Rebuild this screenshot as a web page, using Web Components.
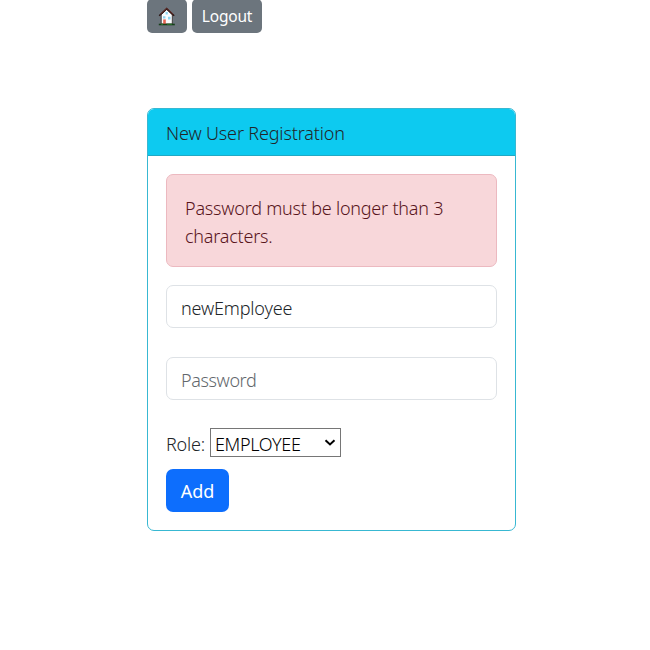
<!DOCTYPE html>
<html lang="en"><head><meta charset="utf-8"><title>New User Registration</title>
<style>body{margin:0;background:#fff;color:#212529;font:300 18px/28px "Noto Sans","Open Sans",sans-serif}</style></head>
<body><registration-page></registration-page>
<script>
const define=(name,html)=>customElements.define(name,class extends HTMLElement{
  constructor(){super();this.attachShadow({mode:'open'}).innerHTML=html}
});
define('nav-button',`<style>:host{display:block}button{all:unset;box-sizing:border-box;display:flex;justify-content:center;align-items:center;height:34px;width:var(--w);border-radius:5px;background:#6c757d;color:#fff;font-size:15.5px;font-weight:400;letter-spacing:var(--ls,0);line-height:34px}</style><button><slot></slot></button>`);
define('home-icon',`<style>:host{display:block;height:20px}svg{display:block}</style><svg width="20" height="20" viewBox="0 0 20 20"><path d="M4.2 18V8.8L9.7 3.4l5.6 5.4V18z" fill="#fafbfd" stroke="#3a3432" stroke-width=".9"/><path d="M2.2 9.8L9.7 2.6l7.5 7.2" fill="none" stroke="#2c1715" stroke-width="1.5"/><path d="M3.2 8.4L9.7 2.3l6.5 6.1" fill="none" stroke="#92372f" stroke-width=".6"/><path d="M8.6 6h2.2v2.4H8.6zM11 10.8h2.6v2.6H11zM6 10.2h2.4v2.2H6z" fill="#8fd5ef"/><path d="M6.2 13.4h2.6V18H6.2z" fill="#e86451"/><path d="M1.8 18.5h16" stroke="#143f18" stroke-width="1.6"/><path d="M4 18.2h2M10 18.2h5" stroke="#358c35" stroke-width=".8"/></svg>`);
define('info-card',`<style>:host{display:block;box-sizing:border-box;width:369px;height:423px;border:1px solid #38b8d2;border-radius:7px;background:#fff;overflow:hidden}header{box-sizing:border-box;height:47px;border-bottom:1px solid #20a9c4;background:#0dcaf0;padding:10px 18px 8px;letter-spacing:var(--title-ls,0)}main{padding:18px}</style><header><slot name="title"></slot></header><main><slot></slot></main>`);
define('alert-box',`<style>:host{display:block;box-sizing:border-box;height:93px;border:1px solid #ecb9c0;border-radius:7px;background:#f8d7da;color:#58151c;padding:19px 18px 17px;white-space:pre-line}</style><slot></slot>`);
define('text-field',`<style>:host{display:block;height:43px}input{box-sizing:border-box;display:block;width:100%;height:43px;margin:0;padding:2px 14px 0;border:1px solid #dee2e6;border-radius:7px;background:#fff;color:#212529;font:inherit;letter-spacing:inherit;outline:0}input::placeholder{color:#62676c;opacity:1}</style><input>`);
define('role-select',`<style>:host{display:flex;height:29px;align-items:center}label{width:44px;letter-spacing:var(--label-ls,0);padding-top:2px}.box{display:grid;width:131px;height:29px;align-items:center}select,svg{grid-area:1/1}select{box-sizing:border-box;width:131px;height:29px;appearance:none;border:1px solid #767676;border-radius:0;background:#fff;color:#000;font:inherit;letter-spacing:var(--value-ls,0);padding:1px 4px 0;margin:0}svg{justify-self:end;margin-right:5px;pointer-events:none}</style><label for="r">Role:</label><div class="box"><select id="r"><option>EMPLOYEE</option></select><svg width="12" height="8" viewBox="0 0 12 8" fill="none" stroke="#000" stroke-width="2"><path d="M1.5 1.2L6 5.4l4.5-4.2"/></svg></div>`);
define('primary-button',`<style>:host{display:block}button{all:unset;box-sizing:border-box;width:63px;height:43px;border-radius:7px;background:#0d6efd;color:#fff;text-align:center;line-height:45px;font-weight:400;letter-spacing:inherit}</style><button><slot></slot></button>`);
customElements.define('registration-page',class extends HTMLElement{constructor(){super();const r=this.attachShadow({mode:'open'});r.innerHTML=`<style>:host{display:block;width:369px;height:650px;margin-left:147px;overflow:hidden}nav{display:flex;gap:5px;margin-top:-1px;height:34px}info-card{margin-top:75px;--title-ls:-.16px}alert-box{letter-spacing:-.22px}text-field{letter-spacing:-.18px;margin-top:18px}#password{letter-spacing:-.4px;margin-top:29px}role-select{margin-top:28px;--label-ls:-.2px;--value-ls:-.35px}primary-button{margin-top:12px}</style><nav><nav-button style="--w:40px"><home-icon></home-icon></nav-button><nav-button style="--w:70px;--ls:-.2px">Logout</nav-button></nav><info-card><span slot="title">New User Registration</span><alert-box>Password must be longer than 3
characters.</alert-box><text-field id="name"></text-field><text-field id="password"></text-field><role-select></role-select><primary-button>Add</primary-button></info-card>`;
r.querySelector('#name').shadowRoot.querySelector('input').value='newEmployee';
const p=r.querySelector('#password').shadowRoot.querySelector('input');p.type='password';p.placeholder='Password';}});
</script></body></html>
